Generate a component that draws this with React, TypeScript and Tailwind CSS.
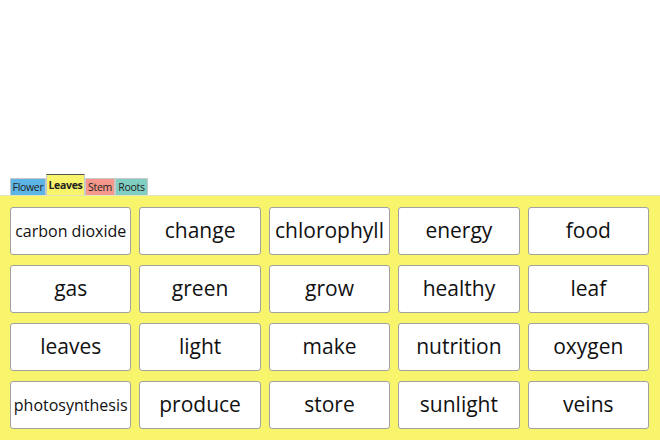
const tabs = [
  { name: "Flower", cls: "w-[36px] bg-[#5db5e6] mt-[4px] h-[17px]" },
  { name: "Leaves", cls: "w-[39px] bg-[#f8f46b] font-bold border-t-[#555] h-[21px] leading-[20px]" },
  { name: "Stem", cls: "w-[30px] bg-[#f5978a] mt-[4px] h-[17px]" },
  { name: "Roots", cls: "w-[33px] bg-[#80cfc2] mt-[4px] h-[17px]" },
];

const words = [
  "carbon dioxide", "change", "chlorophyll", "energy", "food",
  "gas", "green", "grow", "healthy", "leaf",
  "leaves", "light", "make", "nutrition", "oxygen",
  "photosynthesis", "produce", "store", "sunlight", "veins",
];

const App = () => {
  return (
    <div className="w-[660px] h-[440px] bg-white flex flex-col font-['Open_Sans',sans-serif] overflow-hidden">
      <div className="h-[174px]" />
      <div className="flex pl-[10px] h-[21px] items-start">
        {tabs.map((t) => (
          <div
            key={t.name}
            className={`text-center text-[10.5px] leading-[17px] tracking-[-0.3px] text-[#222] border border-[#c9c9c9] border-b-0 whitespace-nowrap ${t.cls}`}
          >
            {t.name}
          </div>
        ))}
      </div>
      <div className="flex-1 bg-[#f8f46b] border-t border-[#e4e4c0] pt-[11px] pl-[10px] pr-[11px]">
        <div className="grid grid-cols-5 gap-x-[8px] gap-y-[10px]">
          {words.map((w) => (
            <div
              key={w}
              className="h-[48px] bg-white border border-[#a0a0a0] rounded-[3px] flex items-center justify-center text-[#111]"
            >
              <span className={w.length > 12 ? "text-[16px]" : "text-[21px]"}>{w}</span>
            </div>
          ))}
        </div>
      </div>
    </div>
  );
};

export default App;
